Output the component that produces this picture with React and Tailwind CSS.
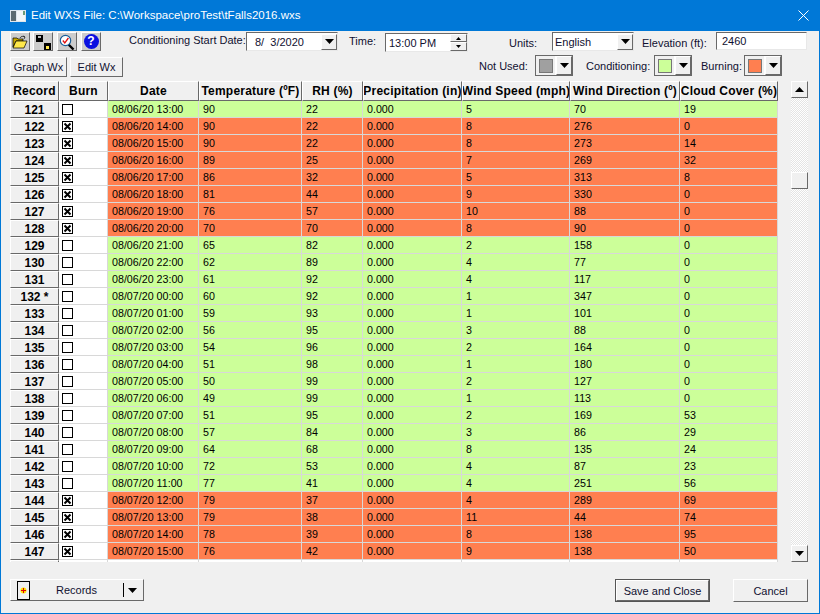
const G = 'bg-[#ccff99]';
const O = 'bg-[#ff7f50]';
const rows = [
  ['121',0,'08/06/20 13:00','90','22','5','70','19'],
  ['122',1,'08/06/20 14:00','90','22','8','276','0'],
  ['123',1,'08/06/20 15:00','90','22','8','273','14'],
  ['124',1,'08/06/20 16:00','89','25','7','269','32'],
  ['125',1,'08/06/20 17:00','86','32','5','313','8'],
  ['126',1,'08/06/20 18:00','81','44','9','330','0'],
  ['127',1,'08/06/20 19:00','76','57','10','88','0'],
  ['128',1,'08/06/20 20:00','70','70','8','90','0'],
  ['129',0,'08/06/20 21:00','65','82','2','158','0'],
  ['130',0,'08/06/20 22:00','62','89','4','77','0'],
  ['131',0,'08/06/20 23:00','61','92','4','117','0'],
  ['132 *',0,'08/07/20 00:00','60','92','1','347','0'],
  ['133',0,'08/07/20 01:00','59','93','1','101','0'],
  ['134',0,'08/07/20 02:00','56','95','3','88','0'],
  ['135',0,'08/07/20 03:00','54','96','2','164','0'],
  ['136',0,'08/07/20 04:00','51','98','1','180','0'],
  ['137',0,'08/07/20 05:00','50','99','2','127','0'],
  ['138',0,'08/07/20 06:00','49','99','1','113','0'],
  ['139',0,'08/07/20 07:00','51','95','2','169','53'],
  ['140',0,'08/07/20 08:00','57','84','3','86','29'],
  ['141',0,'08/07/20 09:00','64','68','8','135','24'],
  ['142',0,'08/07/20 10:00','72','53','4','87','23'],
  ['143',0,'08/07/20 11:00','77','41','4','251','56'],
  ['144',1,'08/07/20 12:00','79','37','4','289','69'],
  ['145',1,'08/07/20 13:00','79','38','11','44','74'],
  ['146',1,'08/07/20 14:00','78','39','8','138','95'],
  ['147',1,'08/07/20 15:00','76','42','9','138','50'],
];
const heads = ['Record','Burn','Date','Temperature (ºF)','RH (%)','Precipitation (in)','Wind Speed (mph)','Wind Direction (º)','Cloud Cover (%)'];
const cols = 'grid grid-cols-[49px_49px_91px_103px_61px_99px_108px_110px_98px]';
const bold = "font-['Liberation_Sans'] font-bold text-[12px] text-black";
const data = "font-['Liberation_Sans'] text-[10.7px] text-black";
const ui = "font-['Liberation_Sans'] text-[11px] leading-[16px] whitespace-nowrap text-[#101030]";
const raised = 'border border-t-white border-l-white border-r-[#696969] border-b-[#696969] bg-[#f0f0f0]';
const sunken = 'border border-t-[#696969] border-l-[#696969] border-r-[#e8e8e8] border-b-[#e8e8e8] bg-white';

function Arrow({ className = '' }) {
  return (
    <svg width="9" height="5" viewBox="0 0 9 5" className={className}>
      <path d="M0 0h9L4.5 5z" fill="#000" />
    </svg>
  );
}

function Check({ on }) {
  return (
    <svg width="11" height="11" viewBox="0 0 11 11" className="block">
      <rect x="0.5" y="0.5" width="10" height="10" fill="#fff" stroke="#000" />
      {on ? <path d="M2.5 2.5l6 6M8.5 2.5l-6 6" stroke="#000" strokeWidth="2" /> : null}
    </svg>
  );
}

function ToolBtn({ children, className = '' }) {
  return (
    <div className={`w-5 h-[19px] flex items-center justify-center border border-t-white border-l-white border-r-[#696969] border-b-[#696969] bg-[#cccccc] ${className}`}>{children}</div>
  );
}

function Swatch({ color }) {
  return (
    <div className="flex h-[21px] w-[38px] border border-[#696969]">
      <div className="w-[20px] flex items-center justify-center border-r border-white">
        <div className={`w-[14px] h-[14px] border border-[#777] ${color}`} />
      </div>
      <div className={`flex-1 flex items-center justify-center ${raised}`}><Arrow /></div>
    </div>
  );
}

function Row({ r }) {
  const c = r[1] ? O : G;
  const cell = `h-[17px] pl-1 flex items-center border-r border-b border-[#d8d8d8] ${data} ${c}`;
  return (
    <div className={cols}>
      <div className={`h-[17px] flex items-center justify-center ${bold} ${raised}`}>{r[0]}</div>
      <div className="h-[17px] pl-[3px] flex items-center bg-white border-b border-r border-[#d8d8d8]"><Check on={r[1]} /></div>
      <div className={cell}>{r[2]}</div>
      <div className={cell}>{r[3]}</div>
      <div className={cell}>{r[4]}</div>
      <div className={cell}>0.000</div>
      <div className={cell}>{r[5]}</div>
      <div className={cell}>{r[6]}</div>
      <div className={cell}>{r[7]}</div>
    </div>
  );
}

export default function App() {
  return (
    <div className="w-[820px] h-[614px] flex flex-col bg-[#f0f0f0] border border-t-0 border-[#0078d7] overflow-hidden">
      <div className="h-[31px] shrink-0 bg-[#0078d7] flex items-center pl-[9px] pr-[10px] text-white font-['Liberation_Sans'] text-[11.5px]">
        <svg width="16" height="14" viewBox="0 0 16 14" className="mr-[5px]">
          <rect x="0" y="1" width="16" height="12" fill="#dfe6ec" />
          <rect x="1" y="2" width="5" height="10" fill="#5d6b70" />
          <rect x="7" y="2" width="8" height="10" fill="#f4f7f8" />
          <rect x="13" y="2" width="2" height="4" fill="#6f9c78" />
        </svg>
        <span>Edit WXS File: C:\Workspace\proTest\tFalls2016.wxs</span>
        <svg width="11" height="11" viewBox="0 0 11 11" className="ml-auto">
          <path d="M0.5 0.5l10 10M10.5 0.5l-10 10" stroke="#fff" strokeWidth="1" />
        </svg>
      </div>

      <div className="h-[24px] shrink-0 flex items-start pt-[1px] pl-[9px]">
        <ToolBtn>
          <svg width="16" height="14" viewBox="0 0 16 14">
            <path d="M1 3h4l1 1h5v2H4L1 12z" fill="#c8a800" stroke="#000" strokeWidth="0.7" />
            <path d="M1 13l3-7h11l-3 7z" fill="#ffe84a" stroke="#000" strokeWidth="0.7" />
            <path d="M8 3c1-2 3-2 5-1M13 2l-2-1M13 2l-1 2" stroke="#222" strokeWidth="0.8" fill="none" />
          </svg>
        </ToolBtn>
        <ToolBtn className="ml-[3px]">
          <svg width="16" height="16" viewBox="0 0 16 16">
            <rect x="1" y="1" width="7" height="7" fill="#000" />
            <rect x="3" y="2" width="3" height="2" fill="#bbb" />
            <rect x="9" y="9" width="7" height="7" fill="#000" />
            <rect x="11" y="12" width="3" height="3" fill="#ffe84a" />
          </svg>
        </ToolBtn>
        <ToolBtn className="ml-[4px]">
          <svg width="16" height="16" viewBox="0 0 16 16">
            <path d="M9.5 10.5l5 5" stroke="#000" strokeWidth="2.4" />
            <circle cx="6.5" cy="6.5" r="5.2" fill="#fff" stroke="#1a5f9a" strokeWidth="1.2" />
            <path d="M3.800 6.500l2 2.500 3.600-5" stroke="#e01010" strokeWidth="1.3" fill="none" />
          </svg>
        </ToolBtn>
        <ToolBtn className="ml-[4px]">
          <div className="w-[15px] h-[15px] rounded-full bg-[#0a10e0] text-white text-[12px] leading-[15px] font-bold text-center font-['Liberation_Sans']">?</div>
        </ToolBtn>
        <div className={`ml-[28px] w-[116px] ${ui}`}>Conditioning Start Date:</div>
        <div className={`ml-[1px] w-[92px] h-[19px] flex items-center pl-[8px] ${sunken} ${ui}`}>
          <span>8/&nbsp;&nbsp;3/2020</span>
          <div className={`ml-auto w-[16px] h-[16px] flex items-center justify-center ${raised}`}><Arrow /></div>
        </div>
        <div className={`ml-[11px] w-[36px] mt-[1px] ${ui}`}>Time:</div>
        <div className={`mt-[1px] w-[83px] h-[19px] flex items-center pl-[3px] ${sunken} ${ui}`}>
          <span>13:00 PM</span>
          <div className="ml-auto w-[17px] h-[17px] flex flex-col">
            <div className={`h-[8px] flex items-center justify-center ${raised}`}><svg width="5" height="3" viewBox="0 0 5 3"><path d="M0 3h5L2.500 0z" /></svg></div>
            <div className={`h-[9px] flex items-center justify-center ${raised}`}><svg width="5" height="3" viewBox="0 0 5 3"><path d="M0 0h5L2.500 3z" /></svg></div>
          </div>
        </div>
        <div className={`ml-[41px] w-[43px] mt-[3px] ${ui}`}>Units:</div>
        <div className={`w-[82px] h-[19px] flex items-center pl-[2px] ${sunken} ${ui}`}>
          <span>English</span>
          <div className={`ml-auto w-[16px] h-[16px] flex items-center justify-center ${raised}`}><Arrow /></div>
        </div>
        <div className={`ml-[8px] w-[74px] mt-[3px] ${ui}`}>Elevation (ft):</div>
        <div className={`w-[91px] h-[18px] flex items-center pl-[5px] ${sunken} ${ui}`}>2460</div>
      </div>

      <div className="h-[26px] shrink-0 flex items-start pl-[9px]">
        <div className={`mt-[2px] w-[57px] h-[20px] flex items-center justify-center ${raised} ${ui}`}>Graph Wx</div>
        <div className={`mt-[2px] ml-[3px] w-[53px] h-[20px] flex items-center justify-center ${raised} ${ui}`}>Edit Wx</div>
        <div className={`ml-[356px] w-[56px] mt-[3px] ${ui}`}>Not Used:</div>
        <Swatch color="bg-[#a0a0a0]" />
        <div className={`ml-[13px] w-[68px] mt-[3px] ${ui}`}>Conditioning:</div>
        <Swatch color={G} />
        <div className={`ml-[9px] w-[43px] mt-[3px] ${ui}`}>Burning:</div>
        <Swatch color={O} />
      </div>

      <div className="h-[481px] shrink-0 flex pl-[9px]">
        <div className="w-[768px] h-[481px] overflow-hidden">
          <div className={cols}>
            {heads.map((h) => (
              <div key={h} className={`h-[20px] flex items-center justify-center whitespace-nowrap overflow-hidden tracking-[0.2px] ${bold} ${raised}`}>{h}</div>
            ))}
          </div>
          {rows.map((r) => <Row key={r[0]} r={r} />)}
          <div className={cols}>
            <div className={`h-[17px] ${raised}`} />
            <div className="h-[17px] bg-white border-r border-[#d8d8d8]" />
            <div className="h-[17px] bg-white border-r border-[#d8d8d8]" />
            <div className="h-[17px] bg-white border-r border-[#d8d8d8]" />
            <div className="h-[17px] bg-white border-r border-[#d8d8d8]" />
            <div className="h-[17px] bg-white border-r border-[#d8d8d8]" />
            <div className="h-[17px] bg-white border-r border-[#d8d8d8]" />
            <div className="h-[17px] bg-white border-r border-[#d8d8d8]" />
            <div className="h-[17px] bg-white border-r border-[#d8d8d8]" />
          </div>
        </div>
        <div className="ml-[13px] w-[17px] h-[481px] flex flex-col bg-[repeating-conic-gradient(#e4e4e4_0_25%,#ffffff_0_50%)] bg-[length:2px_2px]">
          <div className={`w-[17px] h-[17px] shrink-0 flex items-center justify-center ${raised}`}>
            <svg width="9" height="5" viewBox="0 0 9 5"><path d="M0 5h9L4.500 0z" /></svg>
          </div>
          <div className={`mt-[74px] w-[17px] h-[17px] shrink-0 ${raised}`} />
          <div className={`mt-auto w-[17px] h-[17px] shrink-0 flex items-center justify-center ${raised}`}><Arrow /></div>
        </div>
      </div>

      <div className="flex-1 flex items-start pt-[17px] pl-[9px]">
        <div className={`w-[134px] h-[22px] flex items-center ${raised} ${ui}`}>
          <div className="ml-[6px] w-[13px] h-[19px] border border-black flex items-center justify-center">
            <svg width="7" height="7" viewBox="0 0 7 7">
              <circle cx="3.500" cy="3.500" r="3" fill="#ffe000" />
              <path d="M3.500 1v5M1 3.500h5" stroke="#e00000" strokeWidth="1" />
            </svg>
          </div>
          <span className="w-[93px] text-center">Records</span>
          <div className="w-px h-[14px] bg-black" />
          <Arrow className="ml-[4px]" />
        </div>
        <div className="ml-[471px] w-[95px] h-[23px] border border-[#555]">
          <div className={`h-full flex items-center justify-center ${raised} ${ui}`}>Save and Close</div>
        </div>
        <div className={`ml-[23px] w-[75px] h-[23px] flex items-center justify-center ${raised} ${ui}`}>Cancel</div>
      </div>
    </div>
  );
}
